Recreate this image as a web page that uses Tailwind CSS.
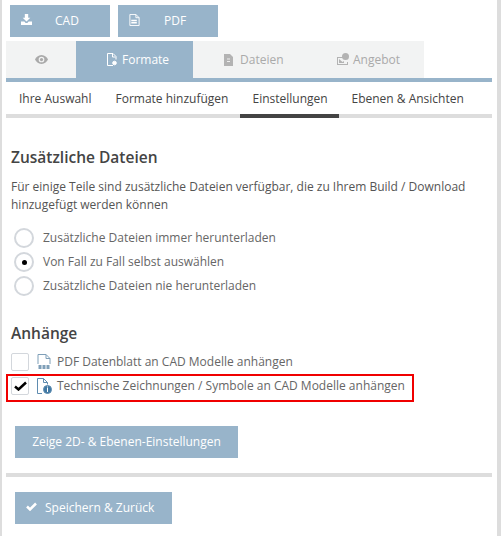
<!DOCTYPE html>
<html lang="de">
<head>
    <meta charset="UTF-8">
    <title>Einstellungen</title>
    <script src="https://cdn.jsdelivr.net/npm/@tailwindcss/browser@4"></script>
</head>
<body class="bg-white w-[501px] h-[536px] overflow-hidden font-['Open_Sans',sans-serif] text-[#555]">
<div class="h-[536px] w-[501px] border-l-2 border-r-4 border-[#ddd] flex">
<div class="w-[486px] ml-[4px] flex flex-col">

    <!-- Download buttons -->
    <div class="flex gap-2 pl-[4px] pt-[5px] h-[41px]">
        <div class="relative w-[100px] h-[32px] bg-[#98b4ca] text-white text-[12px] flex items-center pl-[45px]">
            <svg class="absolute left-[10px] top-[9px] w-[13px] h-[11px]" viewBox="0 0 13 13" fill="#fff"><path d="M4.5 0h4v4.5h2.5L6.5 9 2 4.5h2.5zM0 9h4l1.5 1.5h2L9 9h4v4H0z"/></svg>
            <span>CAD</span>
        </div>
        <div class="relative w-[100px] h-[32px] bg-[#98b4ca] text-white text-[12px] flex items-center pl-[46px]">
            <svg class="absolute left-[11px] top-[9px] w-[11px] h-[12px]" viewBox="0 0 11 13" fill="none" stroke="#fff"><path d="M.5.5h6.5l3.5 3.5v8.5H.5zM7 .5V4h3.5"/><path d="M2 7h6M2 9.5h6" stroke-width="1.5"/></svg>
            <span>PDF</span>
        </div>
    </div>

    <!-- Main tabs -->
    <div class="w-[418px] h-[37px] flex bg-[#f2f3f3] text-[12px] text-[#aaa]">
        <div class="w-[70px] flex items-center justify-center">
            <svg class="w-[13px] h-[9px]" viewBox="0 0 16 11" fill="#aaa"><path d="M8 0C4 0 1.200 2.800 0 5.500 1.200 8.200 4 11 8 11s6.800-2.800 8-5.500C14.800 2.800 12 0 8 0zm0 9a3.500 3.500 0 110-7 3.500 3.500 0 010 7z"/><circle cx="8" cy="5.500" r="2"/></svg>
        </div>
        <div class="w-[117px] bg-[#98b4ca] text-white flex items-center pl-[31px] gap-[5px]">
            <svg class="w-[10px] h-[13px]" viewBox="0 0 10 13" fill="none" stroke="#fff"><path d="M6 12.500H.5V.5h5.500l3 3v3"/><path d="M5.500.5v3.500h3"/><circle cx="7.500" cy="10" r="1.800" fill="#fff"/></svg>
            <span>Formate</span>
        </div>
        <div class="w-[115px] flex items-center pl-[31px] gap-[7px]">
            <svg class="w-[9px] h-[12px]" viewBox="0 0 9 12" fill="#b3b3b3"><path d="M0 0h6l3 3v9H0z"/><path d="M3 5h3M3 7.500h3" stroke="#eee"/></svg>
            <span>Dateien</span>
        </div>
        <div class="w-[116px] flex items-center pl-[28px] gap-[3px]">
            <svg class="w-[14px] h-[13px]" viewBox="0 0 14 13" fill="#b3b3b3"><path d="M1 4h6v1H2v6h9V9h1v3H1z"/><circle cx="9.500" cy="3.500" r="3.500"/><path d="M3 6l3.500 3L8 8v2H3z"/></svg>
            <span>Angebot</span>
        </div>
    </div>
    <div class="w-[486px] h-[4px] bg-[#98b4ca]"></div>

    <!-- Sub tabs -->
    <div class="w-[486px] h-[36px] flex text-[12px] text-[#444] border-b-4 border-[#ddd]">
        <span class="pl-[13px] pr-[12px] pt-[8px]">Ihre Auswahl</span>
        <span class="px-[12px] pt-[8px]">Formate hinzufügen</span>
        <span class="w-[99px] px-[12px] pt-[8px] h-[36px] border-b-4 border-[#444] whitespace-nowrap">Einstellungen</span>
        <span class="px-[12px] pt-[8px]">Ebenen &amp; Ansichten</span>
    </div>

    <!-- Zusaetzliche Dateien -->
    <div class="pt-[29px] pl-[5px]">
        <h2 class="text-[15.5px] leading-[20px] font-semibold text-[#444] mb-[11px]">Zusätzliche Dateien</h2>
        <p class="text-[12px] leading-[18px] w-[470px] text-[#555]">Für einige Teile sind zusätzliche Dateien verfügbar, die zu Ihrem Build / Download hinzugefügt werden können</p>
        <div class="mt-[14px] flex flex-col gap-[4px] text-[12px] text-[#666] pl-[3px]">
            <label class="flex items-center gap-[9px] h-5"><span class="w-5 h-5 rounded-full border-2 border-[#d3d7dc]"></span>Zusätzliche Dateien immer herunterladen</label>
            <label class="flex items-center gap-[9px] h-5"><span class="w-5 h-5 rounded-full border-2 border-[#d3d7dc] flex items-center justify-center"><span class="w-[5px] h-[5px] rounded-full bg-black"></span></span>Von Fall zu Fall selbst auswählen</label>
            <label class="flex items-center gap-[9px] h-5"><span class="w-5 h-5 rounded-full border-2 border-[#d3d7dc]"></span>Zusätzliche Dateien nie herunterladen</label>
        </div>
    </div>

    <!-- Anhaenge -->
    <div class="pt-[27px] pl-[5px]">
        <h2 class="text-[15.5px] leading-[20px] font-semibold text-[#444] mb-[10px]">Anhänge</h2>
        <div class="flex flex-col text-[12px] text-[#666]">
            <label class="flex items-center gap-[5px] h-[18px]">
                <span class="w-[18px] h-[18px] mr-[3px] border border-[#d3d7dc] rounded-[2px]"></span>
                <svg class="w-[15px] h-[16px]" viewBox="0 0 14 16" fill="none" stroke="#7f9fb8"><path d="M.5 10V.5h8l4 4V10M8.500.5v4h4"/><path d="M1 13h11" stroke-width="4" stroke-dasharray="3 1"/></svg>
                PDF Datenblatt an CAD Modelle anhängen
            </label>
            <label class="flex items-center gap-[5px] border-2 border-[#f00000] w-[408px] h-[28px] ml-[-5px] mt-[3px] pl-[3px] pb-[4px]">
                <span class="w-[18px] h-[18px] mr-[3px] border border-[#d3d7dc] rounded-[2px] flex items-center justify-center">
                    <svg class="w-[13px] h-[10px]" viewBox="0 0 13 10" fill="none" stroke="#000" stroke-width="2.500"><path d="M1 5.500l3.500 3L12 1.500"/></svg>
                </span>
                <svg class="w-[15px] h-[16px]" viewBox="0 0 15 16" fill="none" stroke="#5f8cb0"><path d="M5 15.500H.5V.5h6l4 4v2M6.500.5v4h4"/><circle cx="10.500" cy="11.500" r="4" fill="#3f78a4"/><path d="M10.500 10v4M10.500 8.500v1" stroke="#fff"/></svg>
                Technische Zeichnungen / Symbole an CAD Modelle anhängen
            </label>
        </div>
    </div>

    <div class="pl-[9px] pt-[24px]">
        <div class="w-[223px] h-[32px] bg-[#98b4ca] text-white text-[12px] flex items-center justify-center">Zeige 2D- &amp; Ebenen-Einstellungen</div>
    </div>
    <div class="w-[486px] h-[4px] bg-[#ddd] mt-[15px]"></div>
    <div class="pl-[9px] pt-[15px]">
        <div class="relative w-[157px] h-[32px] bg-[#98b4ca] text-white text-[12px] flex items-center pl-[30px]">
            <svg class="absolute left-[11px] top-[10px] w-[11px] h-[9px]" viewBox="0 0 11 9" fill="none" stroke="#fff" stroke-width="2.500"><path d="M1 4.500l3 3L10 1.500"/></svg>
            Speichern &amp; Zurück
        </div>
    </div>
</div>
</div>
</body>
</html>
